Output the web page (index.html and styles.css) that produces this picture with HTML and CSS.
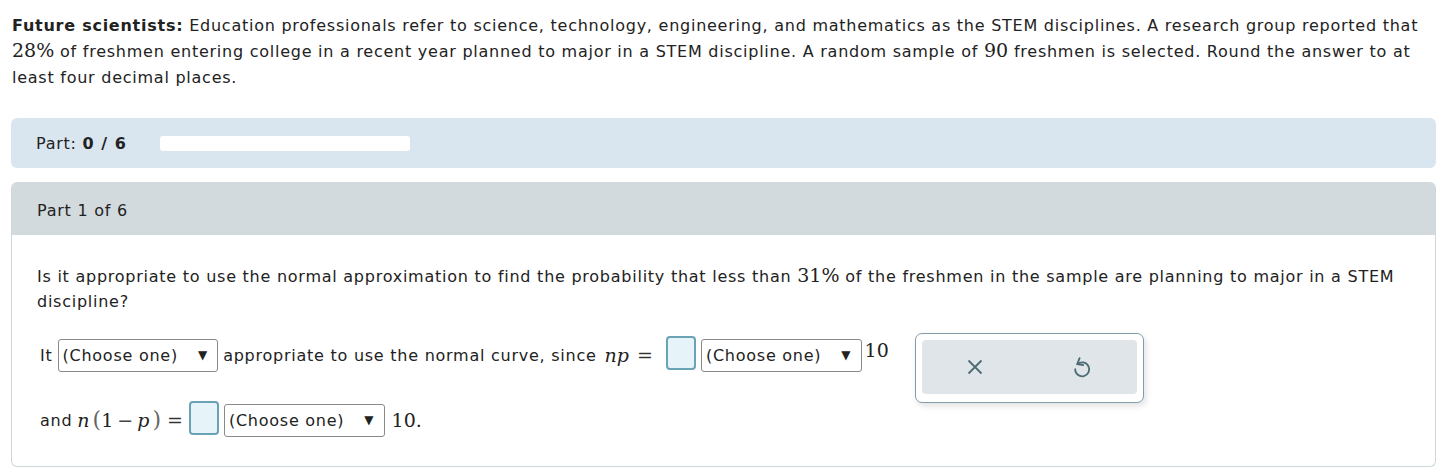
FILE: index.html
```html
<!DOCTYPE html>
<html>
<head>
<meta charset="utf-8">
<link rel="stylesheet" href="styles.css">
</head>
<body>
<div class="page">
  <p class="intro"><b>Future scientists:</b> Education professionals refer to science, technology, engineering, and mathematics as the STEM disciplines. A research group reported that <span class="m">28%</span> of freshmen entering college in a recent year planned to major in a STEM discipline. A random sample of <span class="m">90</span> freshmen is selected. Round the answer to at least four decimal places.</p>

  <div class="partbar">
    <span>Part: <b>0 / 6</b></span>
    <div class="progress"></div>
  </div>

  <div class="panel">
    <div class="panel-head">Part 1 of 6</div>
    <div class="panel-body">
      <p class="question">Is it appropriate to use the normal approximation to find the probability that less than <span class="m">31%</span> of the freshmen in the sample are planning to major in a STEM discipline?</p>
      <div class="row1">
        <div class="line">
          <span>It</span>
          <span class="select">(Choose one)<span class="arrow">▼</span></span>
          <span>appropriate to use the normal curve, since</span>
          <span class="m expr"><i>np</i><span class="eq">=</span></span>
          <span class="box"></span>
          <span class="select">(Choose one)<span class="arrow">▼</span></span>
          <span class="m ten">10</span>
        </div>
        <div class="actions">
          <div class="actions-inner">
            <svg class="ic-x" width="16" height="16" viewBox="0 0 16 16"><path d="M1.5 1.5 L14.5 14.5 M14.5 1.5 L1.5 14.5" stroke="#4d6a75" stroke-width="1.8" fill="none"/></svg>
            <svg class="ic-undo" width="20" height="22" viewBox="0 0 20 22"><path d="M5.4 8.2 A7 7 0 1 1 3.2 13.2" stroke="#4d6a75" stroke-width="1.8" fill="none" stroke-linecap="round"/><path d="M7.6 2.2 L5.2 8.2 L11.2 9" stroke="#4d6a75" stroke-width="1.8" fill="none" stroke-linecap="round" stroke-linejoin="round"/></svg>
          </div>
        </div>
      </div>
      <div class="line line2">
        <span>and</span>
        <span class="m expr"><i>n</i><span class="paren">(</span>1<span class="minus">−</span><i>p</i><span class="paren">)</span><span class="eq">=</span></span>
        <span class="box"></span>
        <span class="select">(Choose one)<span class="arrow">▼</span></span>
        <span class="m ten">10.</span>
      </div>
    </div>
  </div>
</div>
</body>
</html>
```

FILE: styles.css
```css
html, body {
  margin: 0;
  padding: 0;
  background: #ffffff;
}
body {
  font-family: "DejaVu Sans", Verdana, sans-serif;
  font-size: 16px;
  letter-spacing: 0.75px;
  color: #222;
}
.page {
  padding: 13px 8px 0 11px;
}
.intro {
  margin: 0 0 27px 1px;
  line-height: 26px;
}
.m {
  font-family: "DejaVu Serif", "Liberation Serif", serif;
  font-size: 19px;
  line-height: 1;
  letter-spacing: 0;
}
.partbar {
  background: #dae6ef;
  border-radius: 6px;
  height: 50px;
  display: flex;
  align-items: center;
  padding-left: 25px;
  gap: 33px;
}
.partbar b {
  letter-spacing: 1px;
}
.progress {
  width: 250px;
  height: 15px;
  background: #fff;
  border-radius: 3px;
}
.panel {
  margin-top: 14px;
  border: 1px solid #cdd8dc;
  border-top: none;
  border-radius: 6px;
  overflow: hidden;
}
.panel-head {
  background: #d2dadd;
  height: 53px;
  box-sizing: border-box;
  padding-top: 3px;
  display: flex;
  align-items: center;
  padding-left: 25px;
}
.panel-body {
  padding: 29px 18px 26px 25px;
}
.question {
  margin: 0 0 21px 0;
  line-height: 25px;
}
.row1 {
  display: flex;
  align-items: flex-start;
}
.line {
  display: flex;
  align-items: center;
  height: 40px;
  gap: 5px;
  padding-left: 3px;
}
.line2 {
  margin-top: 25px;
}
.select {
  display: inline-flex;
  align-items: center;
  height: 31px;
  padding: 0 10px 0 4px;
  border: 1px solid #8a8a8a;
  border-radius: 3px;
  background: #fff;
}
.arrow {
  font-size: 12px;
  margin-left: 20px;
  letter-spacing: 0;
}
.box {
  width: 26px;
  height: 30px;
  border: 2px solid #6aa3b6;
  border-radius: 4px;
  background: #e6f4f9;
  margin-top: -4px;
}
.expr {
  margin-left: 3px;
  display: inline-flex;
  align-items: center;
}
.eq {
  margin: 0 8px 0 8px;
  color: #333;
}
.line2 .expr {
  margin-left: 0;
}
.line2 .eq {
  margin: 0 1px 0 6px;
}
.paren {
  color: #666;
  font-size: 22px;
  margin: 0 0 0 3px;
}
.minus {
  margin: 0 4px;
  color: #444;
}
.ten {
  margin-left: -2px;
  align-self: flex-start;
  margin-top: 6px;
}
.line2 .ten {
  align-self: center;
  margin-top: 0;
  margin-left: 2px;
}
.actions {
  margin-left: 26px;
  margin-top: -2px;
  margin-bottom: -28px;
  width: 215px;
  height: 54px;
  padding: 6px 6px 8px 6px;
  border: 1px solid #7f9ea9;
  border-radius: 7px;
  box-shadow: 2px 3px 6px rgba(0,0,0,0.12);
  background: #fff;
  flex: none;
}
.actions-inner {
  width: 100%;
  height: 100%;
  background: #dfe5e8;
  border-radius: 4px;
  display: flex;
  align-items: center;
  justify-content: space-around;
}
```
